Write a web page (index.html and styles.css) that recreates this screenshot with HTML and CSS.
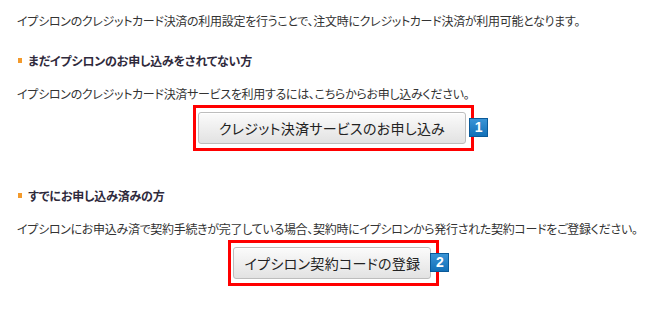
FILE: index.html
```html
<!DOCTYPE html>
<html lang="ja">
<head>
<meta charset="utf-8">
<link rel="stylesheet" href="styles.css">
</head>
<body>
<div class="page">
  <p class="lead">イプシロンのクレジットカード決済の利用設定を行うことで、注文時にクレジットカード決済が利用可能となります。</p>

  <section class="block block-first">
    <h2 class="heading">まだイプシロンのお申し込みをされてない方</h2>
    <p class="desc">イプシロンのクレジットカード決済サービスを利用するには、こちらからお申し込みください。</p>
    <div class="action">
      <span class="mark mark-1">
        <button class="btn btn-apply" type="button">クレジット決済サービスのお申し込み</button>
        <span class="badge">1</span>
      </span>
    </div>
  </section>

  <section class="block block-second">
    <h2 class="heading">すでにお申し込み済みの方</h2>
    <p class="desc">イプシロンにお申込み済で契約手続きが完了している場合、契約時にイプシロンから発行された契約コードをご登録ください。</p>
    <div class="action">
      <span class="mark mark-2">
        <button class="btn btn-code" type="button">イプシロン契約コードの登録</button>
        <span class="badge">2</span>
      </span>
    </div>
  </section>
</div>
</body>
</html>
```

FILE: styles.css
```css
html, body {
  margin: 0;
  padding: 0;
  background: #ffffff;
}

body {
  font-family: "Noto Sans CJK JP", "Noto Sans", sans-serif;
  font-size: 12px;
  color: #333333;
  font-feature-settings: "palt";
}

.page {
  padding: 13px 10px 0 17px;
}

p {
  margin: 0;
  line-height: 16px;
}

.lead {
  letter-spacing: -0.3px;
}

.block-first {
  margin-top: 24px;
}

.block-second {
  margin-top: 37px;
}

.heading {
  position: relative;
  margin: 0;
  padding-left: 11px;
  font-size: 12px;
  font-weight: bold;
  line-height: 16px;
  color: #2f2a3c;
  letter-spacing: -0.2px;
}

.heading::before {
  content: "";
  position: absolute;
  left: 1px;
  top: 5px;
  width: 4px;
  height: 5px;
  background: #f39a2c;
}

.desc {
  margin-top: 17px;
  letter-spacing: -0.3px;
}

.action {
  text-align: center;
  margin-top: 3px;
}

.mark {
  position: relative;
  display: inline-block;
  border: 3px solid #ff0000;
  padding: 4px 5px 4px 2px;
  line-height: 0;
}

.btn {
  display: inline-block;
  height: 32px;
  font-family: "Noto Sans CJK JP", "Noto Sans", sans-serif;
  font-size: 14px;
  color: #222222;
  white-space: nowrap;
  letter-spacing: 0.3px;
  border: 1px solid #bdbdbd;
  border-radius: 3px;
  background: linear-gradient(#fbfbfb, #e2e2e2);
  box-shadow: inset 0 1px 0 #ffffff;
  font-feature-settings: "palt";
  cursor: pointer;
}

.btn-apply {
  padding: 0 20px;
}

.btn-code {
  padding: 0 10px 0 11px;
}

.badge {
  position: absolute;
  top: 50%;
  right: -17px;
  width: 17px;
  height: 17px;
  margin-top: -10px;
  border: 1px solid #0a5a99;
  background: linear-gradient(#3a94d6, #1270b8);
  color: #ffffff;
  font-family: "Liberation Sans", Arial, sans-serif;
  font-size: 14px;
  font-weight: bold;
  line-height: 17px;
  text-align: center;
}

.mark-2 .badge {
  right: -13px;
}
```
